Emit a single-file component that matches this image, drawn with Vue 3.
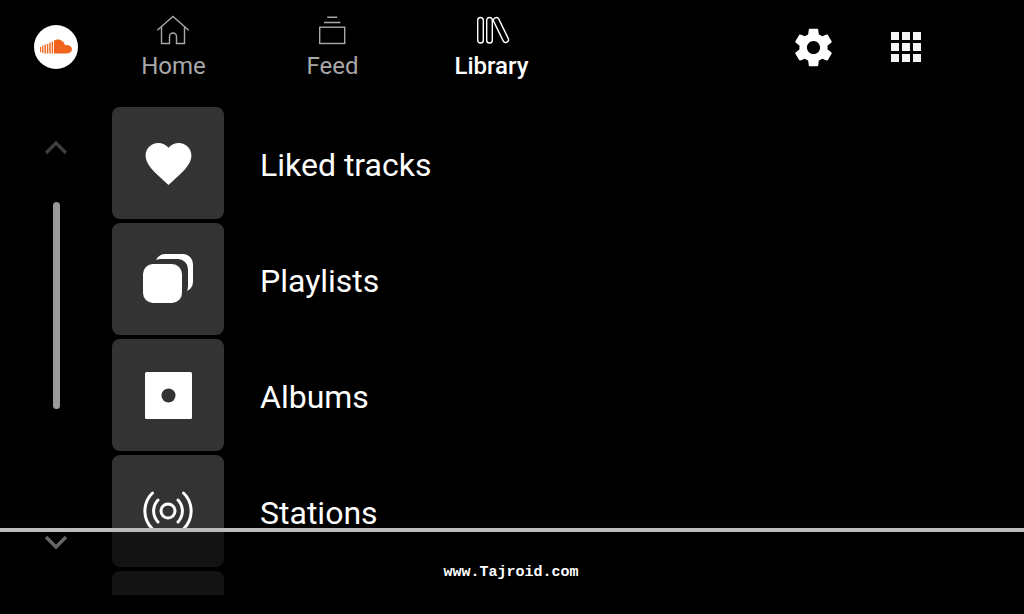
<script setup>
const navItems = [
  { label: 'Home', icon: 'home' },
  { label: 'Feed', icon: 'feed' },
  { label: 'Library', icon: 'library', active: true },
]

const rows = [
  { label: 'Liked tracks', icon: 'heart' },
  { label: 'Playlists', icon: 'playlists' },
  { label: 'Albums', icon: 'album' },
  { label: 'Stations', icon: 'stations' },
  { label: '', icon: '' },
]

const gridCells = Array.from({ length: 9 }, (_, i) => i)
</script>

<template>
  <div class="screen">
    <header class="topbar">
      <div class="logo-slot">
        <div class="logo">
          <svg width="33" height="16" viewBox="0 0 33 16" fill="#f2641e">
            <rect x="0" y="8" width="1.2" height="5" />
            <rect x="2.200" y="6.500" width="1.300" height="7.500" />
            <rect x="4.500" y="5.500" width="1.400" height="9" />
            <rect x="6.900" y="5" width="1.400" height="9.500" />
            <rect x="9.300" y="3.500" width="1.400" height="11" />
            <rect x="11.700" y="2.500" width="1.400" height="12" />
            <path d="M14 14.500V1.600C15 .9 16.400.5 17.800.5c3.600 0 6.500 2.500 7.100 5.800.5-.2 1.100-.3 1.700-.3 2.900 0 5.400 1.900 5.400 4.300s-2.500 4.200-5.400 4.200z" />
          </svg>
        </div>
      </div>

      <nav class="nav">
        <div v-for="item in navItems" :key="item.label" class="nav-item" :class="{ active: item.active }">
          <svg class="nav-icon" width="36" height="30" viewBox="0 0 36 30" fill="none" stroke="currentColor" stroke-width="1.4">
            <template v-if="item.icon === 'home'">
              <path d="M1.300 15.200 17 1.500l15.700 13.700" />
              <path d="M5.500 11.800V28.500h8V21.500a3.500 3.500 0 0 1 7 0v7h8V11.800" />
            </template>
            <template v-else-if="item.icon === 'feed'">
              <rect x="4.700" y="12.200" width="25" height="16.300" />
              <path d="M9 7.500h16.400M12.200 2.300h10" />
            </template>
            <template v-else>
              <rect x="3.700" y="2.500" width="5.600" height="25.500" rx="2.800" />
              <rect x="12.700" y="2.500" width="5.600" height="25.500" rx="2.800" />
              <rect x="24.200" y="1.500" width="5.600" height="27" rx="2.800" transform="rotate(-26 27 15)" />
            </template>
          </svg>
          <span class="nav-label">{{ item.label }}</span>
        </div>
      </nav>

      <div class="actions">
        <svg class="gear" width="45" height="45" viewBox="0 0 24 24" fill="#fff">
          <path d="M19.430 12.980c.04-.32.07-.64.07-.98s-.03-.66-.07-.98l2.110-1.650c.19-.15.24-.42.12-.64l-2-3.460c-.12-.22-.39-.3-.61-.22l-2.490 1c-.52-.4-1.080-.73-1.690-.98l-.38-2.650C14.460 2.180 14.250 2 14 2h-4c-.25 0-.46.18-.49.42l-.38 2.650c-.61.25-1.170.59-1.690.98l-2.490-1c-.23-.09-.49 0-.61.22l-2 3.460c-.13.22-.07.49.12.64l2.110 1.650c-.04.32-.07.650-.07.980s.03.66.07.98l-2.110 1.650c-.19.15-.24.42-.12.64l2 3.460c.12.22.39.3.61.22l2.490-1c.52.4 1.080.73 1.690.98l.38 2.650c.03.24.24.42.49.42h4c.25 0 .46-.18.49-.42l.38-2.650c.61-.25 1.170-.59 1.690-.98l2.490 1c.23.09.49 0 .61-.22l2-3.460c.12-.22.07-.49-.12-.64l-2.110-1.650zM12 15.500c-1.930 0-3.500-1.570-3.500-3.500s1.570-3.500 3.500-3.500 3.500 1.570 3.500 3.500-1.570 3.500-3.500 3.500z" />
        </svg>
        <div class="apps">
          <span v-for="cell in gridCells" :key="cell" class="apps-cell"></span>
        </div>
      </div>
    </header>

    <main class="body">
      <aside class="rail">
        <svg class="chevron chevron-up" width="24" height="15" viewBox="0 0 24 15" fill="none" stroke-width="3.400">
          <path d="M2 13 12 3l10 10" />
        </svg>
        <div class="scrollbar"></div>
        <svg class="chevron chevron-down" width="24" height="15" viewBox="0 0 24 15" fill="none" stroke-width="3.400">
          <path d="M2 2l10 10L22 2" />
        </svg>
      </aside>

      <div class="list">
        <div v-for="(row, idx) in rows" :key="idx" class="row">
          <div class="tile">
            <svg v-if="row.icon === 'heart'" width="55" height="55" viewBox="0 0 24 24" fill="#fff">
              <path d="M12 21.350l-1.450-1.320C5.400 15.360 2 12.280 2 8.500 2 5.420 4.420 3 7.500 3c1.740 0 3.410.81 4.500 2.090C13.090 3.810 14.760 3 16.500 3 19.580 3 22 5.420 22 8.500c0 3.780-3.400 6.860-8.550 11.540L12 21.350z" />
            </svg>
            <svg v-else-if="row.icon === 'playlists'" class="icon-playlists" width="50" height="50" viewBox="0 0 50 50">
              <rect x="12" y="0" width="38" height="38" rx="10" fill="#fff" />
              <rect x="7" y="5" width="38" height="38" rx="10" fill="#333" />
              <rect x="0" y="10" width="39" height="39" rx="10" fill="#fff" />
            </svg>
            <svg v-else-if="row.icon === 'album'" width="47" height="47" viewBox="0 0 47 47">
              <rect width="47" height="47" rx="1.500" fill="#fff" />
              <circle cx="23.500" cy="23.500" r="7" fill="#333" />
            </svg>
            <svg v-else-if="row.icon === 'stations'" width="50" height="40" viewBox="0 0 50 40" fill="none" stroke="#fff" stroke-width="3" stroke-linecap="round">
              <circle cx="25" cy="20" r="7" />
              <path d="M15 9a16 16 0 0 0 0 22M35 9a16 16 0 0 1 0 22" />
              <path d="M9.500 2a25 25 0 0 0 0 36M40.500 2a25 25 0 0 1 0 36" />
            </svg>
          </div>
          <span v-if="row.label" class="row-label">{{ row.label }}</span>
        </div>
      </div>
      <div class="list-fade"></div>
    </main>

    <div class="divider"></div>
    <div class="watermark">www.Tajroid.com</div>
  </div>
</template>

<style scoped>
.screen {
  position: relative;
  width: 1024px;
  height: 614px;
  overflow: hidden;
  background: #000;
  color: #fff;
  font-family: Roboto, "Liberation Sans", sans-serif;
}

.topbar {
  display: flex;
  align-items: flex-start;
  height: 107px;
}

.logo-slot {
  width: 112px;
  padding-top: 25px;
  display: flex;
  justify-content: center;
}

.logo {
  width: 44px;
  height: 44px;
  border-radius: 50%;
  background: #fff;
  display: flex;
  align-items: center;
  justify-content: center;
}

.nav {
  display: flex;
  margin-left: -18px;
}

.nav-item {
  width: 159px;
  display: flex;
  flex-direction: column;
  align-items: center;
  padding-top: 15px;
  color: #a8a8a8;
}

.nav-item.active {
  color: #fff;
}

.nav-label {
  margin-top: 6px;
  font-size: 24px;
  line-height: 30px;
}

.nav-item.active .nav-label {
  font-weight: 500;
}

.actions {
  margin-left: auto;
  margin-right: 103px;
  height: 94px;
  display: flex;
  align-items: center;
  gap: 55px;
}

.apps {
  display: grid;
  grid-template-columns: repeat(3, 8px);
  grid-auto-rows: 8px;
  gap: 3px;
}

.apps-cell {
  background: #f4f4f4;
}

.body {
  position: relative;
  display: flex;
  height: 488px;
}

.rail {
  width: 112px;
  flex: none;
  display: flex;
  flex-direction: column;
  align-items: center;
  padding-top: 33px;
}

.chevron {
  flex: none;
}

.chevron-up {
  stroke: #3c3c3c;
}

.chevron-down {
  margin-top: 126px;
  stroke: #666;
}

.scrollbar {
  flex: none;
  width: 7px;
  height: 207px;
  margin-top: 47px;
  border-radius: 4px;
  background: #999;
}

.list {
  flex: 1;
  min-width: 0;
  height: 488px;
  overflow: hidden;
  display: flex;
  flex-direction: column;
  gap: 4px;
}

.row {
  flex: none;
  height: 112px;
  display: flex;
  align-items: center;
  gap: 36px;
}

.tile {
  width: 112px;
  height: 112px;
  flex: none;
  border-radius: 8px;
  background: #333;
  display: flex;
  align-items: center;
  justify-content: center;
}

.icon-playlists {
  margin-top: -1px;
}

.row-label {
  margin-top: 4px;
  font-size: 32px;
  line-height: 40px;
  color: #fff;
}

/* dims what scrolls under the divider */
.list-fade {
  position: absolute;
  left: 112px;
  right: 0;
  top: 425px;
  bottom: 0;
  background: rgba(0, 0, 0, 0.62);
}

.divider {
  position: absolute;
  left: 0;
  right: 0;
  top: 528px;
  height: 4px;
  background: #bbb;
}

.watermark {
  position: absolute;
  left: 0;
  right: 0;
  top: 564px;
  text-align: center;
  padding-right: 2px;
  font-family: "Liberation Mono", monospace;
  font-size: 15px;
  line-height: 18px;
  font-weight: 700;
  color: #fff;
}
</style>
